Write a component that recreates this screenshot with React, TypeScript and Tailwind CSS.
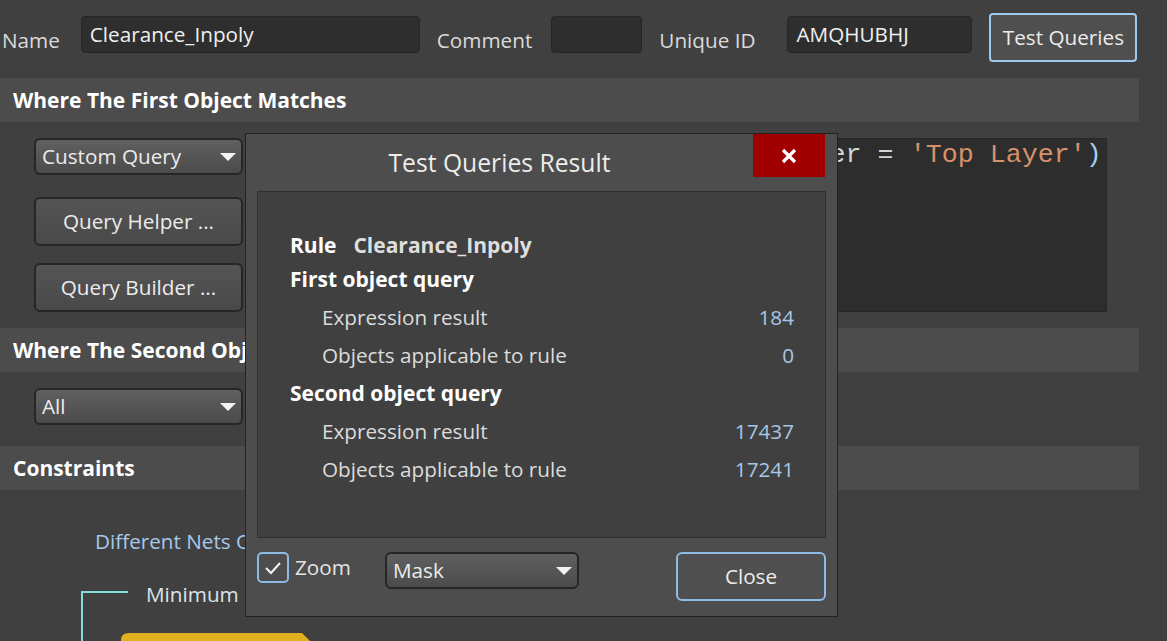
function Arrow() {
    return (
        <svg width="16" height="8" viewBox="0 0 16 8" className="shrink-0">
            <polygon points="0,0 16,0 8,8" fill="#f2f2f2" />
        </svg>
    );
}

function Dropdown({ value, className }: { value: string; className: string }) {
    return (
        <div
            className={
                'flex items-center justify-between rounded-[6px] border-2 border-[#262626] bg-gradient-to-b from-[#606060] to-[#4b4b4b] pl-[6px] pr-[5px] text-[20.7px] text-[#ececec] ' +
                className
            }
        >
            <span>{value}</span>
            <Arrow />
        </div>
    );
}

function SideButton({ label, className }: { label: string; className: string }) {
    return (
        <div
            className={
                'flex h-[49px] w-[209px] items-center justify-center rounded-[6px] border-2 border-[#262626] bg-gradient-to-b from-[#555555] to-[#494949] text-[20.7px] text-[#ececec] ' +
                className
            }
        >
            {label}
        </div>
    );
}

function SectionBar({ title }: { title: string }) {
    return (
        <div className="flex h-[44px] w-[1139px] items-center bg-[#4c4c4c] pl-[13px] text-[21px] font-bold text-white">
            <span className="translate-y-[1px]">{title}</span>
        </div>
    );
}

function ResultRow({ label, value }: { label: string; value: string }) {
    return (
        <div className="flex h-[38px] items-center justify-between pl-[32px] text-[20.7px]">
            <span className="text-[#dcdcdc]">{label}</span>
            <span className="text-[#a9c6e6]">{value}</span>
        </div>
    );
}

function TestQueriesDialog() {
    return (
        <div className="absolute left-[245px] top-[133px] flex h-[484px] w-[593px] flex-col border border-[#232323] bg-[#4d4d4d]">
            <div className="flex h-[57px] items-start">
                <div className="flex h-[57px] flex-1 items-center justify-center text-[24.7px] text-[#ececec]">
                    Test Queries Result
                </div>
                <button
                    type="button"
                    className="flex h-[43px] w-[72px] items-center justify-center bg-[#a00000]"
                >
                    <svg width="16" height="16" viewBox="0 0 16 16">
                        <path d="M2 2 L14 14 M14 2 L2 14" stroke="#ffffff" strokeWidth="3.2" />
                    </svg>
                </button>
                <div className="w-[12px]" />
            </div>
            <div className="mx-[11px] h-[347px] border border-[#303030] bg-[#404040] pl-[32px] pr-[31px] pt-[39px]">
                <div className="flex h-[30px] items-center gap-[17px] text-[21px] font-bold">
                    <span className="text-white">Rule</span>
                    <span className="text-[#dedede]">Clearance_Inpoly</span>
                </div>
                <div className="flex h-[38px] items-center text-[21px] font-bold text-white">First object query</div>
                <ResultRow label="Expression result" value="184" />
                <ResultRow label="Objects applicable to rule" value="0" />
                <div className="flex h-[38px] items-center text-[21px] font-bold text-white">Second object query</div>
                <ResultRow label="Expression result" value="17437" />
                <ResultRow label="Objects applicable to rule" value="17241" />
            </div>
            <div className="flex items-start px-[11px] pt-[14px]">
                <div className="flex w-[128px] items-center">
                    <div className="flex h-[31px] w-[32px] items-center justify-center rounded-[5px] border-2 border-[#8dbbe6]">
                        <svg width="18" height="14" viewBox="0 0 18 14">
                            <polyline points="2,7 7,12 16,2" fill="none" stroke="#f4f4f4" strokeWidth="2" />
                        </svg>
                    </div>
                    <span className="ml-[6px] text-[20.7px] text-[#e4e4e4]">Zoom</span>
                </div>
                <Dropdown value="Mask" className="h-[37px] w-[194px]" />
                <button
                    type="button"
                    className="ml-auto flex h-[49px] w-[150px] items-center justify-center rounded-[6px] border-2 border-[#8dbbe6] bg-[#4f4f4f] text-[20.7px] text-[#ececec]"
                >
                    Close
                </button>
            </div>
        </div>
    );
}

export default function App() {
    return (
        <div className="relative h-[641px] w-[1167px] overflow-hidden bg-[#404040] font-['Open_Sans',sans-serif]">
            {/* top fields */}
            <div className="flex h-[78px] items-start pt-[13px] text-[20.7px]">
                <span className="ml-[2px] mt-[13px] leading-[28px] text-[#dadada]">Name</span>
                <div className="ml-[21px] mt-[3px] flex h-[37px] w-[339px] items-center rounded-[4px] border border-[#262626] bg-[#2e2e2e] pl-[8px] text-[#f0f0f0]">
                    Clearance_Inpoly
                </div>
                <span className="ml-[17px] mt-[13px] leading-[28px] text-[#dadada]">Comment</span>
                <div className="ml-[19px] mt-[3px] h-[37px] w-[91px] rounded-[4px] border border-[#262626] bg-[#2e2e2e]" />
                <span className="ml-[17px] mt-[13px] leading-[28px] text-[#dadada]">Unique ID</span>
                <div className="ml-[32px] mt-[3px] flex h-[37px] w-[185px] items-center rounded-[4px] border border-[#262626] bg-[#2e2e2e] pl-[8px] text-[#f0f0f0]">
                    AMQHUBHJ
                </div>
                <button
                    type="button"
                    className="ml-[17px] flex h-[49px] w-[148px] items-center justify-center rounded-[4px] border-2 border-[#9cc9ef] bg-[#4f4f4f] text-[#ececec]"
                >
                    Test Queries
                </button>
            </div>

            <SectionBar title="Where The First Object Matches" />
            <div className="flex h-[206px] items-start pt-[16px]">
                <div className="ml-[34px] flex w-[209px] flex-col">
                    <Dropdown value="Custom Query" className="h-[37px] w-[209px]" />
                    <SideButton label="Query Helper ..." className="mt-[22px]" />
                    <SideButton label="Query Builder ..." className="mt-[17px]" />
                </div>
                <div className="ml-[15px] h-[174px] w-[849px] overflow-hidden whitespace-pre border border-[#262626] bg-[#2d2d2d] pl-[10px] font-['Liberation_Mono',monospace] text-[26.7px] leading-[32px]">
                    <span className="text-[#d4d4d4]">InNamedPolygon(</span>
                    <span className="text-[#d7916a]">'Inpoly'</span>
                    <span className="text-[#d4d4d4]">) And (OnLayer = </span>
                    <span className="text-[#d7916a]">'Top Layer'</span>
                    <span className="text-[#a9cdf0]">)</span>
                </div>
            </div>

            <SectionBar title="Where The Second Object Matches" />
            <div className="h-[74px] pt-[16px]">
                <Dropdown value="All" className="ml-[34px] h-[37px] w-[209px]" />
            </div>

            <SectionBar title="Constraints" />
            <div className="ml-[95px] mt-[37px] text-[20.7px] leading-[28px] text-[#a6c8ea]">Different Nets Only</div>
            <div className="relative h-[86px]">
                <svg width="400" height="86" className="absolute left-0 top-0">
                    <polyline points="82,86 82,37 128,37" fill="none" stroke="#86dcd6" strokeWidth="2" />
                    <path d="M121 86 L121 85 Q121 78 129 78 L302 78 L310 86 Z" fill="#e2b01e" />
                </svg>
                <span className="absolute left-[146px] top-[25px] text-[20.7px] leading-[28px] text-[#dde3ea]">
                    Minimum Clearance
                </span>
            </div>

            <TestQueriesDialog />
        </div>
    );
}
